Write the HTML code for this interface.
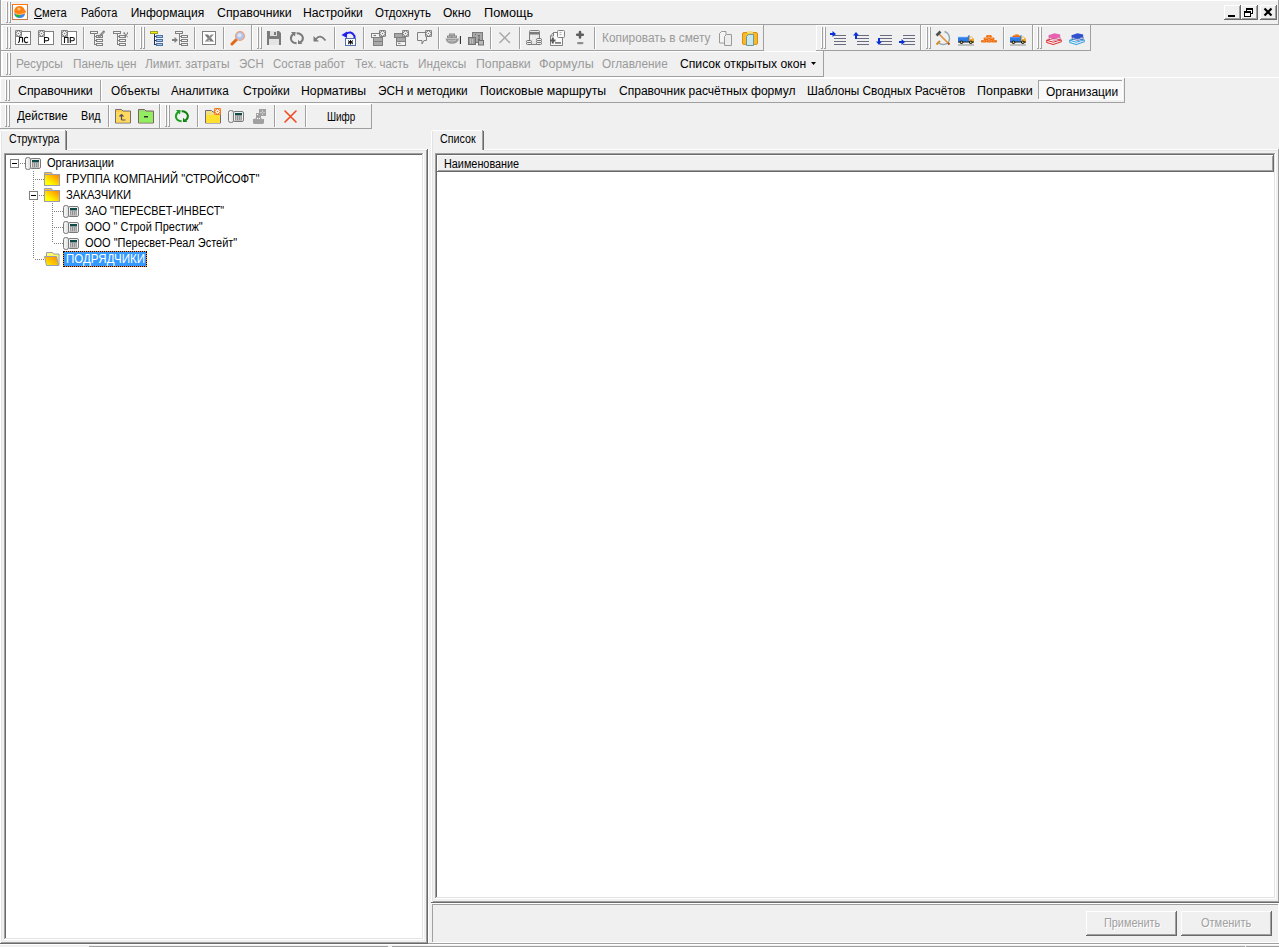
<!DOCTYPE html><html><head><meta charset="utf-8"><style>
*{margin:0;padding:0;box-sizing:border-box}
html,body{width:1279px;height:947px;overflow:hidden;background:#f0f0f0}
body{position:relative;font-family:"Liberation Sans",sans-serif}
.a{position:absolute}
.t{font-size:12px;line-height:14px;white-space:pre}
.tah{font-size:11px;line-height:13px;white-space:pre}
.dis{color:#8c8c8c}
</style></head><body><div class="a" style="left:0px;top:0px;width:1279px;height:1px;background:#fff;"></div>
<div class="a" style="left:0px;top:0px;width:1px;height:77px;background:#a0a0a0;"></div>
<div class="a" style="left:1px;top:1px;width:1px;height:76px;background:#fff;"></div>
<div class="a" style="left:1278px;top:0px;width:1px;height:25px;background:#a0a0a0;"></div>
<div class="a" style="left:0px;top:24px;width:1279px;height:1px;background:#a0a0a0;"></div>
<div class="a" style="left:6px;top:2px;width:1px;height:21px;background:#fff;"></div>
<div class="a" style="left:7px;top:2px;width:1px;height:21px;background:#a0a0a0;"></div>
<div class="a" style="left:9px;top:2px;width:1px;height:21px;background:#fff;"></div>
<div class="a" style="left:10px;top:2px;width:1px;height:21px;background:#a0a0a0;"></div>
<div class="a" style="left:6px;top:22px;width:1px;height:1px;background:#a0a0a0;"></div>
<div class="a" style="left:9px;top:22px;width:1px;height:1px;background:#a0a0a0;"></div>
<svg class="a" style="left:12px;top:4px" width="16" height="16" viewBox="0 0 16 16"><rect x="0.5" y="0.5" width="15" height="15" fill="#fff" stroke="#c87845"/><path d="M0 0.5H16" stroke="#ff7818"/><path d="M2 9.5Q3 14 8 14Q12 14 13 10z" fill="#3a86f0"/><path d="M3 10Q4 13.5 7 13.5Q8.5 11 7 10z" fill="#20b828"/><path d="M2.2 8.5Q2 2 7.5 2Q11.5 2 12.5 5.5L14 7.5Q13 10.5 10 10.5Q5 11 2.2 8.5Z" fill="#ff8010"/><path d="M4 10Q8 11.5 12.5 9" stroke="#ffc060" stroke-width="1" fill="none"/><circle cx="7" cy="5" r="1.6" fill="#ffc080"/></svg>
<div class="a t" style="left:34.30px;top:6px;color:#000;font-size:12px;transform:scaleX(0.9310);transform-origin:0 0;"><u>С</u>мета</div>
<div class="a t" style="left:80.70px;top:6px;color:#000;font-size:12px;transform:scaleX(0.9167);transform-origin:0 0;">Работа</div>
<div class="a t" style="left:130.70px;top:6px;color:#000;font-size:12px;">Информация</div>
<div class="a t" style="left:216.60px;top:6px;color:#000;font-size:12px;transform:scaleX(1.0265);transform-origin:0 0;">Справочники</div>
<div class="a t" style="left:303.20px;top:6px;color:#000;font-size:12px;transform:scaleX(1.0183);transform-origin:0 0;">Настройки</div>
<div class="a t" style="left:375.10px;top:6px;color:#000;font-size:12px;transform:scaleX(0.9588);transform-origin:0 0;">Отдохнуть</div>
<div class="a t" style="left:443.20px;top:6px;color:#000;font-size:12px;transform:scaleX(1.0032);transform-origin:0 0;">Окно</div>
<div class="a t" style="left:484.20px;top:6px;color:#000;font-size:12px;transform:scaleX(1.0587);transform-origin:0 0;">Помощь</div>
<div class="a" style="left:1224px;top:5px;width:17px;height:15px;background:#f0f0f0;"></div>
<div class="a" style="left:1224px;top:5px;width:17px;height:1px;background:#fff;"></div>
<div class="a" style="left:1224px;top:5px;width:1px;height:15px;background:#fff;"></div>
<div class="a" style="left:1224px;top:19px;width:17px;height:1px;background:#696969;"></div>
<div class="a" style="left:1240px;top:5px;width:1px;height:15px;background:#696969;"></div>
<div class="a" style="left:1225px;top:18px;width:15px;height:1px;background:#a0a0a0;"></div>
<div class="a" style="left:1239px;top:6px;width:1px;height:13px;background:#a0a0a0;"></div>
<div class="a" style="left:1228px;top:15px;width:7px;height:2px;background:#000"></div>
<div class="a" style="left:1241px;top:5px;width:17px;height:15px;background:#f0f0f0;"></div>
<div class="a" style="left:1241px;top:5px;width:17px;height:1px;background:#fff;"></div>
<div class="a" style="left:1241px;top:5px;width:1px;height:15px;background:#fff;"></div>
<div class="a" style="left:1241px;top:19px;width:17px;height:1px;background:#696969;"></div>
<div class="a" style="left:1257px;top:5px;width:1px;height:15px;background:#696969;"></div>
<div class="a" style="left:1242px;top:18px;width:15px;height:1px;background:#a0a0a0;"></div>
<div class="a" style="left:1256px;top:6px;width:1px;height:13px;background:#a0a0a0;"></div>
<svg class="a" style="left:1244px;top:7px" width="10" height="11"><rect x="2.5" y="1.5" width="6" height="5" fill="#fff" stroke="#000"/><rect x="2" y="1" width="7" height="2" fill="#000"/><rect x="0.5" y="4.5" width="6" height="5" fill="#fff" stroke="#000"/><rect x="0" y="4" width="7" height="2" fill="#000"/></svg>
<div class="a" style="left:1260px;top:5px;width:17px;height:15px;background:#f0f0f0;"></div>
<div class="a" style="left:1260px;top:5px;width:17px;height:1px;background:#fff;"></div>
<div class="a" style="left:1260px;top:5px;width:1px;height:15px;background:#fff;"></div>
<div class="a" style="left:1260px;top:19px;width:17px;height:1px;background:#696969;"></div>
<div class="a" style="left:1276px;top:5px;width:1px;height:15px;background:#696969;"></div>
<div class="a" style="left:1261px;top:18px;width:15px;height:1px;background:#a0a0a0;"></div>
<div class="a" style="left:1275px;top:6px;width:1px;height:13px;background:#a0a0a0;"></div>
<svg class="a" style="left:1263px;top:7px" width="11" height="10"><path d="M1.5 1.5L8.5 8.5M8.5 1.5L1.5 8.5" stroke="#000" stroke-width="2.2"/></svg>
<div class="a" style="left:2px;top:25px;width:133px;height:1px;background:#fff;"></div>
<div class="a" style="left:2px;top:25px;width:1px;height:26px;background:#fff;"></div>
<div class="a" style="left:2px;top:50px;width:133px;height:1px;background:#a0a0a0;"></div>
<div class="a" style="left:134px;top:25px;width:1px;height:26px;background:#a0a0a0;"></div>
<div class="a" style="left:6px;top:27px;width:1px;height:22px;background:#fff;"></div>
<div class="a" style="left:7px;top:27px;width:1px;height:22px;background:#a0a0a0;"></div>
<div class="a" style="left:9px;top:27px;width:1px;height:22px;background:#fff;"></div>
<div class="a" style="left:10px;top:27px;width:1px;height:22px;background:#a0a0a0;"></div>
<div class="a" style="left:6px;top:48px;width:1px;height:1px;background:#a0a0a0;"></div>
<div class="a" style="left:9px;top:48px;width:1px;height:1px;background:#a0a0a0;"></div>
<div class="a" style="left:135px;top:25px;width:117px;height:1px;background:#fff;"></div>
<div class="a" style="left:135px;top:25px;width:1px;height:26px;background:#fff;"></div>
<div class="a" style="left:135px;top:50px;width:117px;height:1px;background:#a0a0a0;"></div>
<div class="a" style="left:251px;top:25px;width:1px;height:26px;background:#a0a0a0;"></div>
<div class="a" style="left:140px;top:27px;width:1px;height:22px;background:#fff;"></div>
<div class="a" style="left:141px;top:27px;width:1px;height:22px;background:#a0a0a0;"></div>
<div class="a" style="left:143px;top:27px;width:1px;height:22px;background:#fff;"></div>
<div class="a" style="left:144px;top:27px;width:1px;height:22px;background:#a0a0a0;"></div>
<div class="a" style="left:140px;top:48px;width:1px;height:1px;background:#a0a0a0;"></div>
<div class="a" style="left:143px;top:48px;width:1px;height:1px;background:#a0a0a0;"></div>
<div class="a" style="left:252px;top:25px;width:512px;height:1px;background:#fff;"></div>
<div class="a" style="left:252px;top:25px;width:1px;height:26px;background:#fff;"></div>
<div class="a" style="left:252px;top:50px;width:512px;height:1px;background:#a0a0a0;"></div>
<div class="a" style="left:763px;top:25px;width:1px;height:26px;background:#a0a0a0;"></div>
<div class="a" style="left:257px;top:27px;width:1px;height:22px;background:#fff;"></div>
<div class="a" style="left:258px;top:27px;width:1px;height:22px;background:#a0a0a0;"></div>
<div class="a" style="left:260px;top:27px;width:1px;height:22px;background:#fff;"></div>
<div class="a" style="left:261px;top:27px;width:1px;height:22px;background:#a0a0a0;"></div>
<div class="a" style="left:257px;top:48px;width:1px;height:1px;background:#a0a0a0;"></div>
<div class="a" style="left:260px;top:48px;width:1px;height:1px;background:#a0a0a0;"></div>
<div class="a" style="left:816px;top:25px;width:105px;height:1px;background:#fff;"></div>
<div class="a" style="left:816px;top:25px;width:1px;height:26px;background:#fff;"></div>
<div class="a" style="left:816px;top:50px;width:105px;height:1px;background:#a0a0a0;"></div>
<div class="a" style="left:920px;top:25px;width:1px;height:26px;background:#a0a0a0;"></div>
<div class="a" style="left:821px;top:27px;width:1px;height:22px;background:#fff;"></div>
<div class="a" style="left:822px;top:27px;width:1px;height:22px;background:#a0a0a0;"></div>
<div class="a" style="left:824px;top:27px;width:1px;height:22px;background:#fff;"></div>
<div class="a" style="left:825px;top:27px;width:1px;height:22px;background:#a0a0a0;"></div>
<div class="a" style="left:821px;top:48px;width:1px;height:1px;background:#a0a0a0;"></div>
<div class="a" style="left:824px;top:48px;width:1px;height:1px;background:#a0a0a0;"></div>
<div class="a" style="left:921px;top:25px;width:112px;height:1px;background:#fff;"></div>
<div class="a" style="left:921px;top:25px;width:1px;height:26px;background:#fff;"></div>
<div class="a" style="left:921px;top:50px;width:112px;height:1px;background:#a0a0a0;"></div>
<div class="a" style="left:1032px;top:25px;width:1px;height:26px;background:#a0a0a0;"></div>
<div class="a" style="left:926px;top:27px;width:1px;height:22px;background:#fff;"></div>
<div class="a" style="left:927px;top:27px;width:1px;height:22px;background:#a0a0a0;"></div>
<div class="a" style="left:929px;top:27px;width:1px;height:22px;background:#fff;"></div>
<div class="a" style="left:930px;top:27px;width:1px;height:22px;background:#a0a0a0;"></div>
<div class="a" style="left:926px;top:48px;width:1px;height:1px;background:#a0a0a0;"></div>
<div class="a" style="left:929px;top:48px;width:1px;height:1px;background:#a0a0a0;"></div>
<div class="a" style="left:1033px;top:25px;width:58px;height:1px;background:#fff;"></div>
<div class="a" style="left:1033px;top:25px;width:1px;height:26px;background:#fff;"></div>
<div class="a" style="left:1033px;top:50px;width:58px;height:1px;background:#a0a0a0;"></div>
<div class="a" style="left:1090px;top:25px;width:1px;height:26px;background:#a0a0a0;"></div>
<div class="a" style="left:1037px;top:27px;width:1px;height:22px;background:#fff;"></div>
<div class="a" style="left:1038px;top:27px;width:1px;height:22px;background:#a0a0a0;"></div>
<div class="a" style="left:1040px;top:27px;width:1px;height:22px;background:#fff;"></div>
<div class="a" style="left:1041px;top:27px;width:1px;height:22px;background:#a0a0a0;"></div>
<div class="a" style="left:1037px;top:48px;width:1px;height:1px;background:#a0a0a0;"></div>
<div class="a" style="left:1040px;top:48px;width:1px;height:1px;background:#a0a0a0;"></div>
<div class="a" style="left:83px;top:27px;width:1px;height:22px;background:#a0a0a0;"></div>
<div class="a" style="left:84px;top:27px;width:1px;height:22px;background:#fff;"></div>
<div class="a" style="left:194px;top:27px;width:1px;height:22px;background:#a0a0a0;"></div>
<div class="a" style="left:195px;top:27px;width:1px;height:22px;background:#fff;"></div>
<div class="a" style="left:223px;top:27px;width:1px;height:22px;background:#a0a0a0;"></div>
<div class="a" style="left:224px;top:27px;width:1px;height:22px;background:#fff;"></div>
<div class="a" style="left:334px;top:27px;width:1px;height:22px;background:#a0a0a0;"></div>
<div class="a" style="left:335px;top:27px;width:1px;height:22px;background:#fff;"></div>
<div class="a" style="left:363px;top:27px;width:1px;height:22px;background:#a0a0a0;"></div>
<div class="a" style="left:364px;top:27px;width:1px;height:22px;background:#fff;"></div>
<div class="a" style="left:438px;top:27px;width:1px;height:22px;background:#a0a0a0;"></div>
<div class="a" style="left:439px;top:27px;width:1px;height:22px;background:#fff;"></div>
<div class="a" style="left:490px;top:27px;width:1px;height:22px;background:#a0a0a0;"></div>
<div class="a" style="left:491px;top:27px;width:1px;height:22px;background:#fff;"></div>
<div class="a" style="left:519px;top:27px;width:1px;height:22px;background:#a0a0a0;"></div>
<div class="a" style="left:520px;top:27px;width:1px;height:22px;background:#fff;"></div>
<div class="a" style="left:594px;top:27px;width:1px;height:22px;background:#a0a0a0;"></div>
<div class="a" style="left:595px;top:27px;width:1px;height:22px;background:#fff;"></div>
<div class="a" style="left:1003px;top:27px;width:1px;height:22px;background:#a0a0a0;"></div>
<div class="a" style="left:1004px;top:27px;width:1px;height:22px;background:#fff;"></div>
<div class="a t" style="left:602.00px;top:31px;color:#9a9a9a;font-size:12px;transform:scaleX(0.9881);transform-origin:0 0;">Копировать в смету</div>
<div class="a" style="left:2px;top:51px;width:822px;height:1px;background:#fff;"></div>
<div class="a" style="left:2px;top:51px;width:1px;height:26px;background:#fff;"></div>
<div class="a" style="left:2px;top:76px;width:822px;height:1px;background:#a0a0a0;"></div>
<div class="a" style="left:823px;top:51px;width:1px;height:26px;background:#a0a0a0;"></div>
<div class="a" style="left:0px;top:50px;width:2px;height:1px;background:#a0a0a0;"></div>
<div class="a" style="left:6px;top:53px;width:1px;height:22px;background:#fff;"></div>
<div class="a" style="left:7px;top:53px;width:1px;height:22px;background:#a0a0a0;"></div>
<div class="a" style="left:9px;top:53px;width:1px;height:22px;background:#fff;"></div>
<div class="a" style="left:10px;top:53px;width:1px;height:22px;background:#a0a0a0;"></div>
<div class="a" style="left:6px;top:74px;width:1px;height:1px;background:#a0a0a0;"></div>
<div class="a" style="left:9px;top:74px;width:1px;height:1px;background:#a0a0a0;"></div>
<div class="a t" style="left:16.30px;top:57px;color:#9a9a9a;font-size:12px;transform:scaleX(0.9895);transform-origin:0 0;">Ресурсы</div>
<div class="a t" style="left:72.50px;top:57px;color:#9a9a9a;font-size:12px;transform:scaleX(0.9813);transform-origin:0 0;">Панель цен</div>
<div class="a t" style="left:145.00px;top:57px;color:#9a9a9a;font-size:12px;transform:scaleX(0.9958);transform-origin:0 0;">Лимит. затраты</div>
<div class="a t" style="left:239.00px;top:57px;color:#9a9a9a;font-size:12px;transform:scaleX(0.9490);transform-origin:0 0;">ЭСН</div>
<div class="a t" style="left:272.50px;top:57px;color:#9a9a9a;font-size:12px;transform:scaleX(0.9575);transform-origin:0 0;">Состав работ</div>
<div class="a t" style="left:354.50px;top:57px;color:#9a9a9a;font-size:12px;transform:scaleX(0.9527);transform-origin:0 0;">Тех. часть</div>
<div class="a t" style="left:417.50px;top:57px;color:#9a9a9a;font-size:12px;transform:scaleX(0.9832);transform-origin:0 0;">Индексы</div>
<div class="a t" style="left:475.50px;top:57px;color:#9a9a9a;font-size:12px;transform:scaleX(1.0233);transform-origin:0 0;">Поправки</div>
<div class="a t" style="left:539.00px;top:57px;color:#9a9a9a;font-size:12px;transform:scaleX(1.0466);transform-origin:0 0;">Формулы</div>
<div class="a t" style="left:602.00px;top:57px;color:#9a9a9a;font-size:12px;transform:scaleX(0.9817);transform-origin:0 0;">Оглавление</div>
<div class="a t" style="left:679.50px;top:57px;color:#000;font-size:12px;transform:scaleX(1.0129);transform-origin:0 0;">Список открытых окон</div>
<svg class="a" style="left:811px;top:62px" width="5" height="3"><path d="M0 0H5L2.5 3Z" fill="#000"/></svg>
<div class="a" style="left:0px;top:76px;width:824px;height:1px;background:#a0a0a0;"></div>
<div class="a" style="left:0px;top:77px;width:1279px;height:1px;background:#fff;"></div>
<div class="a" style="left:0px;top:78px;width:1125px;height:1px;background:#fff;"></div>
<div class="a" style="left:0px;top:78px;width:1px;height:25px;background:#fff;"></div>
<div class="a" style="left:0px;top:102px;width:1125px;height:1px;background:#a0a0a0;"></div>
<div class="a" style="left:1124px;top:78px;width:1px;height:25px;background:#a0a0a0;"></div>
<div class="a" style="left:5px;top:80px;width:1px;height:21px;background:#fff;"></div>
<div class="a" style="left:6px;top:80px;width:1px;height:21px;background:#a0a0a0;"></div>
<div class="a" style="left:8px;top:80px;width:1px;height:21px;background:#fff;"></div>
<div class="a" style="left:9px;top:80px;width:1px;height:21px;background:#a0a0a0;"></div>
<div class="a" style="left:5px;top:100px;width:1px;height:1px;background:#a0a0a0;"></div>
<div class="a" style="left:8px;top:100px;width:1px;height:1px;background:#a0a0a0;"></div>
<div class="a" style="left:100px;top:80px;width:1px;height:21px;background:#a0a0a0;"></div>
<div class="a" style="left:101px;top:80px;width:1px;height:21px;background:#fff;"></div>
<div class="a t" style="left:17.50px;top:84px;color:#000;font-size:12px;transform:scaleX(1.0279);transform-origin:0 0;">Справочники</div>
<div class="a t" style="left:110.50px;top:84px;color:#000;font-size:12px;transform:scaleX(0.9823);transform-origin:0 0;">Объекты</div>
<div class="a t" style="left:171.00px;top:84px;color:#000;font-size:12px;transform:scaleX(0.9712);transform-origin:0 0;">Аналитика</div>
<div class="a t" style="left:242.50px;top:84px;color:#000;font-size:12px;transform:scaleX(1.0118);transform-origin:0 0;">Стройки</div>
<div class="a t" style="left:301.00px;top:84px;color:#000;font-size:12px;transform:scaleX(1.0198);transform-origin:0 0;">Нормативы</div>
<div class="a t" style="left:378.00px;top:84px;color:#000;font-size:12px;transform:scaleX(0.9826);transform-origin:0 0;">ЭСН и методики</div>
<div class="a t" style="left:480.00px;top:84px;color:#000;font-size:12px;transform:scaleX(1.0259);transform-origin:0 0;">Поисковые маршруты</div>
<div class="a t" style="left:618.50px;top:84px;color:#000;font-size:12px;transform:scaleX(1.0035);transform-origin:0 0;">Справочник расчётных формул</div>
<div class="a t" style="left:807.00px;top:84px;color:#000;font-size:12px;transform:scaleX(0.9850);transform-origin:0 0;">Шаблоны Сводных Расчётов</div>
<div class="a t" style="left:977.00px;top:84px;color:#000;font-size:12px;transform:scaleX(1.0423);transform-origin:0 0;">Поправки</div>
<div class="a" style="left:1038px;top:80px;width:85px;height:20px;background:#f9f9f9;"></div>
<div class="a" style="left:1038px;top:80px;width:85px;height:1px;background:#a0a0a0;"></div>
<div class="a" style="left:1038px;top:80px;width:1px;height:20px;background:#a0a0a0;"></div>
<div class="a" style="left:1038px;top:99px;width:85px;height:1px;background:#fff;"></div>
<div class="a" style="left:1122px;top:80px;width:1px;height:20px;background:#fff;"></div>
<div class="a t" style="left:1045.50px;top:85px;color:#000;font-size:12px;transform:scaleX(0.9948);transform-origin:0 0;">Организации</div>
<div class="a" style="left:0px;top:102px;width:1125px;height:1px;background:#a0a0a0;"></div>
<div class="a" style="left:0px;top:103px;width:372px;height:1px;background:#fff;"></div>
<div class="a" style="left:0px;top:104px;width:160px;height:1px;background:#fff;"></div>
<div class="a" style="left:0px;top:104px;width:1px;height:25px;background:#fff;"></div>
<div class="a" style="left:0px;top:128px;width:160px;height:1px;background:#a0a0a0;"></div>
<div class="a" style="left:159px;top:104px;width:1px;height:25px;background:#a0a0a0;"></div>
<div class="a" style="left:5px;top:105px;width:1px;height:22px;background:#fff;"></div>
<div class="a" style="left:6px;top:105px;width:1px;height:22px;background:#a0a0a0;"></div>
<div class="a" style="left:8px;top:105px;width:1px;height:22px;background:#fff;"></div>
<div class="a" style="left:9px;top:105px;width:1px;height:22px;background:#a0a0a0;"></div>
<div class="a" style="left:5px;top:126px;width:1px;height:1px;background:#a0a0a0;"></div>
<div class="a" style="left:8px;top:126px;width:1px;height:1px;background:#a0a0a0;"></div>
<div class="a t" style="left:17.00px;top:109px;color:#000;font-size:12px;transform:scaleX(0.9608);transform-origin:0 0;">Действие</div>
<div class="a t" style="left:80.50px;top:109px;color:#000;font-size:12px;transform:scaleX(0.8983);transform-origin:0 0;">Вид</div>
<div class="a" style="left:108px;top:105px;width:1px;height:22px;background:#a0a0a0;"></div>
<div class="a" style="left:109px;top:105px;width:1px;height:22px;background:#fff;"></div>
<div class="a" style="left:160px;top:104px;width:212px;height:1px;background:#fff;"></div>
<div class="a" style="left:160px;top:104px;width:1px;height:25px;background:#fff;"></div>
<div class="a" style="left:160px;top:128px;width:212px;height:1px;background:#a0a0a0;"></div>
<div class="a" style="left:371px;top:104px;width:1px;height:25px;background:#a0a0a0;"></div>
<div class="a" style="left:165px;top:105px;width:1px;height:22px;background:#fff;"></div>
<div class="a" style="left:166px;top:105px;width:1px;height:22px;background:#a0a0a0;"></div>
<div class="a" style="left:168px;top:105px;width:1px;height:22px;background:#fff;"></div>
<div class="a" style="left:169px;top:105px;width:1px;height:22px;background:#a0a0a0;"></div>
<div class="a" style="left:165px;top:126px;width:1px;height:1px;background:#a0a0a0;"></div>
<div class="a" style="left:168px;top:126px;width:1px;height:1px;background:#a0a0a0;"></div>
<div class="a" style="left:197px;top:105px;width:1px;height:22px;background:#a0a0a0;"></div>
<div class="a" style="left:198px;top:105px;width:1px;height:22px;background:#fff;"></div>
<div class="a" style="left:274px;top:105px;width:1px;height:22px;background:#a0a0a0;"></div>
<div class="a" style="left:275px;top:105px;width:1px;height:22px;background:#fff;"></div>
<div class="a" style="left:305px;top:105px;width:1px;height:22px;background:#a0a0a0;"></div>
<div class="a" style="left:306px;top:105px;width:1px;height:22px;background:#fff;"></div>
<div class="a t" style="left:326.50px;top:110px;color:#000;font-size:12px;transform:scaleX(0.8243);transform-origin:0 0;">Шифр</div>
<div class="a" style="left:0px;top:128px;width:372px;height:1px;background:#a0a0a0;"></div>
<div class="a" style="left:1px;top:130px;width:64px;height:1px;background:#fff;"></div>
<div class="a" style="left:0px;top:131px;width:1px;height:812px;background:#fff;"></div>
<div class="a" style="left:1px;top:131px;width:1px;height:810px;background:#e3e3e3;"></div>
<div class="a" style="left:65px;top:130px;width:1px;height:20px;background:#a0a0a0;"></div>
<div class="a" style="left:66px;top:131px;width:1px;height:19px;background:#696969;"></div>
<div class="a t" style="left:8.60px;top:132px;color:#000;font-size:12px;transform:scaleX(0.8872);transform-origin:0 0;">Структура</div>
<div class="a" style="left:67px;top:149px;width:361px;height:1px;background:#fff;"></div>
<div class="a" style="left:67px;top:150px;width:359px;height:1px;background:#e3e3e3;"></div>
<div class="a" style="left:426px;top:150px;width:1px;height:793px;background:#a0a0a0;"></div>
<div class="a" style="left:427px;top:149px;width:1px;height:795px;background:#696969;"></div>
<div class="a" style="left:1px;top:942px;width:426px;height:1px;background:#a0a0a0;"></div>
<div class="a" style="left:0px;top:943px;width:428px;height:1px;background:#696969;"></div>
<div class="a" style="left:4px;top:153px;width:420px;height:787px;background:#fff;"></div>
<div class="a" style="left:4px;top:153px;width:419px;height:1px;background:#a0a0a0;"></div>
<div class="a" style="left:4px;top:153px;width:1px;height:786px;background:#a0a0a0;"></div>
<div class="a" style="left:5px;top:154px;width:417px;height:1px;background:#696969;"></div>
<div class="a" style="left:5px;top:154px;width:1px;height:784px;background:#696969;"></div>
<div class="a" style="left:4px;top:939px;width:420px;height:1px;background:#fff;"></div>
<div class="a" style="left:423px;top:153px;width:1px;height:787px;background:#fff;"></div>
<div class="a" style="left:5px;top:938px;width:418px;height:1px;background:#e3e3e3;"></div>
<div class="a" style="left:422px;top:154px;width:1px;height:785px;background:#e3e3e3;"></div>
<div class="a" style="left:428px;top:149px;width:1px;height:795px;background:#fff;"></div>
<div class="a" style="left:432px;top:130px;width:50px;height:1px;background:#fff;"></div>
<div class="a" style="left:431px;top:131px;width:1px;height:773px;background:#fff;"></div>
<div class="a" style="left:432px;top:131px;width:1px;height:770px;background:#e3e3e3;"></div>
<div class="a" style="left:482px;top:130px;width:1px;height:20px;background:#a0a0a0;"></div>
<div class="a" style="left:483px;top:131px;width:1px;height:19px;background:#696969;"></div>
<div class="a t" style="left:439.70px;top:132px;color:#000;font-size:12px;transform:scaleX(0.8924);transform-origin:0 0;">Список</div>
<div class="a" style="left:484px;top:149px;width:794px;height:1px;background:#fff;"></div>
<div class="a" style="left:484px;top:150px;width:793px;height:1px;background:#e3e3e3;"></div>
<div class="a" style="left:1278px;top:149px;width:1px;height:754px;background:#a0a0a0;"></div>
<div class="a" style="left:433px;top:901px;width:845px;height:1px;background:#a0a0a0;"></div>
<div class="a" style="left:431px;top:902px;width:848px;height:1px;background:#696969;"></div>
<div class="a" style="left:435px;top:153px;width:841px;height:746px;background:#fff;"></div>
<div class="a" style="left:435px;top:153px;width:840px;height:1px;background:#a0a0a0;"></div>
<div class="a" style="left:435px;top:153px;width:1px;height:745px;background:#a0a0a0;"></div>
<div class="a" style="left:436px;top:154px;width:838px;height:1px;background:#696969;"></div>
<div class="a" style="left:436px;top:154px;width:1px;height:743px;background:#696969;"></div>
<div class="a" style="left:435px;top:898px;width:841px;height:1px;background:#fff;"></div>
<div class="a" style="left:1275px;top:153px;width:1px;height:746px;background:#fff;"></div>
<div class="a" style="left:436px;top:897px;width:839px;height:1px;background:#e3e3e3;"></div>
<div class="a" style="left:1274px;top:154px;width:1px;height:744px;background:#e3e3e3;"></div>
<div class="a" style="left:437px;top:155px;width:837px;height:17px;background:#f0f0f0;"></div>
<div class="a" style="left:437px;top:155px;width:837px;height:1px;background:#fff;"></div>
<div class="a" style="left:437px;top:155px;width:1px;height:17px;background:#fff;"></div>
<div class="a" style="left:437px;top:171px;width:837px;height:1px;background:#696969;"></div>
<div class="a" style="left:1273px;top:155px;width:1px;height:17px;background:#696969;"></div>
<div class="a" style="left:438px;top:170px;width:835px;height:1px;background:#a0a0a0;"></div>
<div class="a" style="left:1272px;top:156px;width:1px;height:15px;background:#a0a0a0;"></div>
<div class="a t" style="left:443.60px;top:157px;color:#000;font-size:12px;transform:scaleX(0.9029);transform-origin:0 0;">Наименование</div>
<div class="a" style="left:431px;top:903px;width:848px;height:1px;background:#fff;"></div>
<div class="a" style="left:432px;top:904px;width:846px;height:1px;background:#a0a0a0;"></div>
<div class="a" style="left:432px;top:904px;width:1px;height:38px;background:#a0a0a0;"></div>
<div class="a" style="left:432px;top:942px;width:847px;height:1px;background:#fff;"></div>
<div class="a" style="left:1278px;top:904px;width:1px;height:39px;background:#fff;"></div>
<div class="a" style="left:1086px;top:911px;width:91px;height:25px;background:#f0f0f0;"></div>
<div class="a" style="left:1086px;top:911px;width:91px;height:1px;background:#fff;"></div>
<div class="a" style="left:1086px;top:911px;width:1px;height:25px;background:#fff;"></div>
<div class="a" style="left:1086px;top:935px;width:91px;height:1px;background:#696969;"></div>
<div class="a" style="left:1176px;top:911px;width:1px;height:25px;background:#696969;"></div>
<div class="a" style="left:1087px;top:934px;width:89px;height:1px;background:#a0a0a0;"></div>
<div class="a" style="left:1175px;top:912px;width:1px;height:23px;background:#a0a0a0;"></div>
<div class="a t" style="left:1104.00px;top:916px;color:#a0a0a0;font-size:12px;transform:scaleX(0.9069);transform-origin:0 0;text-shadow:1px 1px 0 #fff">Применить</div>
<div class="a" style="left:1181px;top:911px;width:91px;height:25px;background:#f0f0f0;"></div>
<div class="a" style="left:1181px;top:911px;width:91px;height:1px;background:#fff;"></div>
<div class="a" style="left:1181px;top:911px;width:1px;height:25px;background:#fff;"></div>
<div class="a" style="left:1181px;top:935px;width:91px;height:1px;background:#696969;"></div>
<div class="a" style="left:1271px;top:911px;width:1px;height:25px;background:#696969;"></div>
<div class="a" style="left:1182px;top:934px;width:89px;height:1px;background:#a0a0a0;"></div>
<div class="a" style="left:1270px;top:912px;width:1px;height:23px;background:#a0a0a0;"></div>
<div class="a t" style="left:1201.00px;top:916px;color:#a0a0a0;font-size:12px;transform:scaleX(0.9161);transform-origin:0 0;text-shadow:1px 1px 0 #fff">Отменить</div>
<div class="a" style="left:428px;top:943px;width:851px;height:1px;background:#a0a0a0;"></div>
<div class="a" style="left:0px;top:944px;width:1279px;height:1px;background:#fff;"></div>
<div class="a" style="left:89px;top:946px;width:299px;height:1px;background:#a0a0a0;"></div>
<div class="a" style="left:392px;top:946px;width:853px;height:1px;background:#a0a0a0;"></div>
<div class="a" style="left:1246px;top:946px;width:33px;height:1px;background:#a0a0a0;"></div>
<div class="a" style="left:10px;top:159px;width:9px;height:9px;border:1px solid #808080;background:#fff"></div>
<div class="a" style="left:12px;top:163px;width:5px;height:1px;background:#000;"></div>
<div class="a" style="left:20px;top:163px;width:1px;height:1px;background:#808080;"></div>
<div class="a" style="left:22px;top:163px;width:1px;height:1px;background:#808080;"></div>
<div class="a" style="left:24px;top:163px;width:1px;height:1px;background:#808080;"></div>
<svg class="a" style="left:25px;top:155px" width="16" height="16" viewBox="0 0 16 16"><rect x="5.5" y="3.5" width="10" height="10" rx="1.5" fill="#f0f0f0" stroke="#7a7a7a"/><rect x="0.5" y="2.5" width="5" height="12" rx="2" fill="#e6e6e6" stroke="#7a7a7a"/><path d="M2 4v9" stroke="#fff"/><rect x="7" y="5" width="7" height="2.3" fill="#0e4a48"/><rect x="7" y="7.3" width="7" height="5.2" fill="#8a8a8a"/><path d="M7.8 9h1.2M10 9h1.2M12.2 9h1.2M7.8 11h1.2M10 11h1.2M12.2 11h1.2" stroke="#fff" stroke-width="1.1"/></svg>
<div class="a t" style="left:47.00px;top:156px;color:#000;font-size:12px;transform:scaleX(0.9238);transform-origin:0 0;">Организации</div>
<div class="a" style="left:33px;top:171px;width:1px;height:1px;background:#808080;"></div>
<div class="a" style="left:33px;top:173px;width:1px;height:1px;background:#808080;"></div>
<div class="a" style="left:33px;top:175px;width:1px;height:1px;background:#808080;"></div>
<div class="a" style="left:33px;top:177px;width:1px;height:1px;background:#808080;"></div>
<div class="a" style="left:33px;top:179px;width:1px;height:1px;background:#808080;"></div>
<div class="a" style="left:33px;top:181px;width:1px;height:1px;background:#808080;"></div>
<div class="a" style="left:33px;top:183px;width:1px;height:1px;background:#808080;"></div>
<div class="a" style="left:33px;top:185px;width:1px;height:1px;background:#808080;"></div>
<div class="a" style="left:33px;top:187px;width:1px;height:1px;background:#808080;"></div>
<div class="a" style="left:33px;top:189px;width:1px;height:1px;background:#808080;"></div>
<div class="a" style="left:33px;top:191px;width:1px;height:1px;background:#808080;"></div>
<div class="a" style="left:33px;top:193px;width:1px;height:1px;background:#808080;"></div>
<div class="a" style="left:33px;top:195px;width:1px;height:1px;background:#808080;"></div>
<div class="a" style="left:33px;top:197px;width:1px;height:1px;background:#808080;"></div>
<div class="a" style="left:33px;top:199px;width:1px;height:1px;background:#808080;"></div>
<div class="a" style="left:33px;top:201px;width:1px;height:1px;background:#808080;"></div>
<div class="a" style="left:33px;top:203px;width:1px;height:1px;background:#808080;"></div>
<div class="a" style="left:33px;top:205px;width:1px;height:1px;background:#808080;"></div>
<div class="a" style="left:33px;top:207px;width:1px;height:1px;background:#808080;"></div>
<div class="a" style="left:33px;top:209px;width:1px;height:1px;background:#808080;"></div>
<div class="a" style="left:33px;top:211px;width:1px;height:1px;background:#808080;"></div>
<div class="a" style="left:33px;top:213px;width:1px;height:1px;background:#808080;"></div>
<div class="a" style="left:33px;top:215px;width:1px;height:1px;background:#808080;"></div>
<div class="a" style="left:33px;top:217px;width:1px;height:1px;background:#808080;"></div>
<div class="a" style="left:33px;top:219px;width:1px;height:1px;background:#808080;"></div>
<div class="a" style="left:33px;top:221px;width:1px;height:1px;background:#808080;"></div>
<div class="a" style="left:33px;top:223px;width:1px;height:1px;background:#808080;"></div>
<div class="a" style="left:33px;top:225px;width:1px;height:1px;background:#808080;"></div>
<div class="a" style="left:33px;top:227px;width:1px;height:1px;background:#808080;"></div>
<div class="a" style="left:33px;top:229px;width:1px;height:1px;background:#808080;"></div>
<div class="a" style="left:33px;top:231px;width:1px;height:1px;background:#808080;"></div>
<div class="a" style="left:33px;top:233px;width:1px;height:1px;background:#808080;"></div>
<div class="a" style="left:33px;top:235px;width:1px;height:1px;background:#808080;"></div>
<div class="a" style="left:33px;top:237px;width:1px;height:1px;background:#808080;"></div>
<div class="a" style="left:33px;top:239px;width:1px;height:1px;background:#808080;"></div>
<div class="a" style="left:33px;top:241px;width:1px;height:1px;background:#808080;"></div>
<div class="a" style="left:33px;top:243px;width:1px;height:1px;background:#808080;"></div>
<div class="a" style="left:33px;top:245px;width:1px;height:1px;background:#808080;"></div>
<div class="a" style="left:33px;top:247px;width:1px;height:1px;background:#808080;"></div>
<div class="a" style="left:33px;top:249px;width:1px;height:1px;background:#808080;"></div>
<div class="a" style="left:33px;top:251px;width:1px;height:1px;background:#808080;"></div>
<div class="a" style="left:33px;top:253px;width:1px;height:1px;background:#808080;"></div>
<div class="a" style="left:33px;top:255px;width:1px;height:1px;background:#808080;"></div>
<div class="a" style="left:33px;top:257px;width:1px;height:1px;background:#808080;"></div>
<div class="a" style="left:35px;top:179px;width:1px;height:1px;background:#808080;"></div>
<div class="a" style="left:37px;top:179px;width:1px;height:1px;background:#808080;"></div>
<div class="a" style="left:39px;top:179px;width:1px;height:1px;background:#808080;"></div>
<div class="a" style="left:41px;top:179px;width:1px;height:1px;background:#808080;"></div>
<div class="a" style="left:43px;top:179px;width:1px;height:1px;background:#808080;"></div>
<div class="a" style="left:35px;top:259px;width:1px;height:1px;background:#808080;"></div>
<div class="a" style="left:37px;top:259px;width:1px;height:1px;background:#808080;"></div>
<div class="a" style="left:39px;top:259px;width:1px;height:1px;background:#808080;"></div>
<div class="a" style="left:41px;top:259px;width:1px;height:1px;background:#808080;"></div>
<div class="a" style="left:43px;top:259px;width:1px;height:1px;background:#808080;"></div>
<svg class="a" style="left:44px;top:171px" width="16" height="16" viewBox="0 0 16 16"><defs><linearGradient id="fg" x1="0" y1="1" x2="1" y2="0"><stop offset="0.25" stop-color="#ffff00"/><stop offset="0.95" stop-color="#ff8800"/></linearGradient></defs><path d="M0.5 3.5V1.5h7l1 2" fill="#ffc040" stroke="#9c9cb0"/><rect x="0.5" y="3.5" width="15" height="11" fill="url(#fg)" stroke="#9c9cb0"/></svg>
<div class="a t" style="left:65.50px;top:172px;color:#000;font-size:12px;transform:scaleX(0.9398);transform-origin:0 0;">ГРУППА КОМПАНИЙ "СТРОЙСОФТ"</div>
<div class="a" style="left:29px;top:191px;width:9px;height:9px;border:1px solid #808080;background:#fff"></div>
<div class="a" style="left:31px;top:195px;width:5px;height:1px;background:#000;"></div>
<div class="a" style="left:39px;top:195px;width:1px;height:1px;background:#808080;"></div>
<div class="a" style="left:41px;top:195px;width:1px;height:1px;background:#808080;"></div>
<div class="a" style="left:43px;top:195px;width:1px;height:1px;background:#808080;"></div>
<svg class="a" style="left:44px;top:187px" width="16" height="16" viewBox="0 0 16 16"><defs><linearGradient id="fg" x1="0" y1="1" x2="1" y2="0"><stop offset="0.25" stop-color="#ffff00"/><stop offset="0.95" stop-color="#ff8800"/></linearGradient></defs><path d="M0.5 3.5V1.5h7l1 2" fill="#ffc040" stroke="#9c9cb0"/><rect x="0.5" y="3.5" width="15" height="11" fill="url(#fg)" stroke="#9c9cb0"/></svg>
<div class="a t" style="left:66.00px;top:188px;color:#000;font-size:12px;transform:scaleX(0.9387);transform-origin:0 0;">ЗАКАЗЧИКИ</div>
<div class="a" style="left:52px;top:203px;width:1px;height:1px;background:#808080;"></div>
<div class="a" style="left:52px;top:205px;width:1px;height:1px;background:#808080;"></div>
<div class="a" style="left:52px;top:207px;width:1px;height:1px;background:#808080;"></div>
<div class="a" style="left:52px;top:209px;width:1px;height:1px;background:#808080;"></div>
<div class="a" style="left:52px;top:211px;width:1px;height:1px;background:#808080;"></div>
<div class="a" style="left:52px;top:213px;width:1px;height:1px;background:#808080;"></div>
<div class="a" style="left:52px;top:215px;width:1px;height:1px;background:#808080;"></div>
<div class="a" style="left:52px;top:217px;width:1px;height:1px;background:#808080;"></div>
<div class="a" style="left:52px;top:219px;width:1px;height:1px;background:#808080;"></div>
<div class="a" style="left:52px;top:221px;width:1px;height:1px;background:#808080;"></div>
<div class="a" style="left:52px;top:223px;width:1px;height:1px;background:#808080;"></div>
<div class="a" style="left:52px;top:225px;width:1px;height:1px;background:#808080;"></div>
<div class="a" style="left:52px;top:227px;width:1px;height:1px;background:#808080;"></div>
<div class="a" style="left:52px;top:229px;width:1px;height:1px;background:#808080;"></div>
<div class="a" style="left:52px;top:231px;width:1px;height:1px;background:#808080;"></div>
<div class="a" style="left:52px;top:233px;width:1px;height:1px;background:#808080;"></div>
<div class="a" style="left:52px;top:235px;width:1px;height:1px;background:#808080;"></div>
<div class="a" style="left:52px;top:237px;width:1px;height:1px;background:#808080;"></div>
<div class="a" style="left:52px;top:239px;width:1px;height:1px;background:#808080;"></div>
<div class="a" style="left:52px;top:241px;width:1px;height:1px;background:#808080;"></div>
<div class="a" style="left:54px;top:211px;width:1px;height:1px;background:#808080;"></div>
<div class="a" style="left:56px;top:211px;width:1px;height:1px;background:#808080;"></div>
<div class="a" style="left:58px;top:211px;width:1px;height:1px;background:#808080;"></div>
<div class="a" style="left:60px;top:211px;width:1px;height:1px;background:#808080;"></div>
<div class="a" style="left:62px;top:211px;width:1px;height:1px;background:#808080;"></div>
<svg class="a" style="left:63px;top:203px" width="16" height="16" viewBox="0 0 16 16"><rect x="5.5" y="3.5" width="10" height="10" rx="1.5" fill="#f0f0f0" stroke="#7a7a7a"/><rect x="0.5" y="2.5" width="5" height="12" rx="2" fill="#e6e6e6" stroke="#7a7a7a"/><path d="M2 4v9" stroke="#fff"/><rect x="7" y="5" width="7" height="2.3" fill="#0e4a48"/><rect x="7" y="7.3" width="7" height="5.2" fill="#8a8a8a"/><path d="M7.8 9h1.2M10 9h1.2M12.2 9h1.2M7.8 11h1.2M10 11h1.2M12.2 11h1.2" stroke="#fff" stroke-width="1.1"/></svg>
<div class="a t" style="left:84.50px;top:204px;color:#000;font-size:12px;transform:scaleX(0.9052);transform-origin:0 0;">ЗАО "ПЕРЕСВЕТ-ИНВЕСТ"</div>
<div class="a" style="left:54px;top:227px;width:1px;height:1px;background:#808080;"></div>
<div class="a" style="left:56px;top:227px;width:1px;height:1px;background:#808080;"></div>
<div class="a" style="left:58px;top:227px;width:1px;height:1px;background:#808080;"></div>
<div class="a" style="left:60px;top:227px;width:1px;height:1px;background:#808080;"></div>
<div class="a" style="left:62px;top:227px;width:1px;height:1px;background:#808080;"></div>
<svg class="a" style="left:63px;top:219px" width="16" height="16" viewBox="0 0 16 16"><rect x="5.5" y="3.5" width="10" height="10" rx="1.5" fill="#f0f0f0" stroke="#7a7a7a"/><rect x="0.5" y="2.5" width="5" height="12" rx="2" fill="#e6e6e6" stroke="#7a7a7a"/><path d="M2 4v9" stroke="#fff"/><rect x="7" y="5" width="7" height="2.3" fill="#0e4a48"/><rect x="7" y="7.3" width="7" height="5.2" fill="#8a8a8a"/><path d="M7.8 9h1.2M10 9h1.2M12.2 9h1.2M7.8 11h1.2M10 11h1.2M12.2 11h1.2" stroke="#fff" stroke-width="1.1"/></svg>
<div class="a t" style="left:84.50px;top:220px;color:#000;font-size:12px;transform:scaleX(0.9131);transform-origin:0 0;">ООО " Строй Престиж"</div>
<div class="a" style="left:54px;top:243px;width:1px;height:1px;background:#808080;"></div>
<div class="a" style="left:56px;top:243px;width:1px;height:1px;background:#808080;"></div>
<div class="a" style="left:58px;top:243px;width:1px;height:1px;background:#808080;"></div>
<div class="a" style="left:60px;top:243px;width:1px;height:1px;background:#808080;"></div>
<div class="a" style="left:62px;top:243px;width:1px;height:1px;background:#808080;"></div>
<svg class="a" style="left:63px;top:235px" width="16" height="16" viewBox="0 0 16 16"><rect x="5.5" y="3.5" width="10" height="10" rx="1.5" fill="#f0f0f0" stroke="#7a7a7a"/><rect x="0.5" y="2.5" width="5" height="12" rx="2" fill="#e6e6e6" stroke="#7a7a7a"/><path d="M2 4v9" stroke="#fff"/><rect x="7" y="5" width="7" height="2.3" fill="#0e4a48"/><rect x="7" y="7.3" width="7" height="5.2" fill="#8a8a8a"/><path d="M7.8 9h1.2M10 9h1.2M12.2 9h1.2M7.8 11h1.2M10 11h1.2M12.2 11h1.2" stroke="#fff" stroke-width="1.1"/></svg>
<div class="a t" style="left:84.50px;top:236px;color:#000;font-size:12px;transform:scaleX(0.9142);transform-origin:0 0;">ООО "Пересвет-Реал Эстейт"</div>
<svg class="a" style="left:44px;top:251px" width="16" height="16" viewBox="0 0 16 16"><defs><linearGradient id="fo" x1="0" y1="1" x2="1" y2="0"><stop offset="0.1" stop-color="#ffee00"/><stop offset="0.9" stop-color="#ff9000"/></linearGradient></defs><path d="M2.5 6V1.5h6l1 1.5h5.5v11.5" fill="#ffff60" stroke="#9c9cb0"/><path d="M0.5 5.5H12.5L14.5 14.5H2.5Z" fill="url(#fo)" stroke="#9c9cb0"/></svg>
<div class="a" style="left:63px;top:251px;width:84px;height:16px;background:#3399ff;border:1px solid #ff9020;outline:1px dotted #000;outline-offset:-1px"></div>
<div class="a t" style="left:65.80px;top:252px;color:#fff;font-size:12px;transform:scaleX(0.9625);transform-origin:0 0;">ПОДРЯДЧИКИ</div>
<svg class="a" style="left:15px;top:30px" width="16" height="16" viewBox="0 0 16 16"><rect x="0.5" y="1.5" width="15" height="13" fill="#fff" stroke="#808080"/><rect x="0" y="0" width="7" height="7" rx="1.2" fill="#7e7e7e"/><path d="M3.5 1L6 3.5L3.5 6L1 3.5Z" fill="#fff"/><circle cx="3.5" cy="3.5" r="0.8" fill="#7e7e7e"/><circle cx="1.3" cy="1.3" r="0.5" fill="#fff"/><circle cx="5.7" cy="1.3" r="0.5" fill="#fff"/><circle cx="1.3" cy="5.7" r="0.5" fill="#fff"/><circle cx="5.7" cy="5.7" r="0.5" fill="#fff"/><path d="M3 12.5Q4.5 12.5 4.5 10V7.5H7.5V12.5" stroke="#111" stroke-width="1.1" fill="none"/><path d="M13 8Q12.5 7.3 11.3 7.3Q9.3 7.3 9.3 10Q9.3 12.6 11.3 12.6Q12.5 12.6 13 11.8" stroke="#111" stroke-width="1.1" fill="none"/></svg>
<svg class="a" style="left:38px;top:30px" width="16" height="16" viewBox="0 0 16 16"><rect x="0.5" y="1.5" width="15" height="13" fill="#fff" stroke="#808080"/><rect x="0" y="0" width="7" height="7" rx="1.2" fill="#7e7e7e"/><path d="M3.5 1L6 3.5L3.5 6L1 3.5Z" fill="#fff"/><circle cx="3.5" cy="3.5" r="0.8" fill="#7e7e7e"/><circle cx="1.3" cy="1.3" r="0.5" fill="#fff"/><circle cx="5.7" cy="1.3" r="0.5" fill="#fff"/><circle cx="1.3" cy="5.7" r="0.5" fill="#fff"/><circle cx="5.7" cy="5.7" r="0.5" fill="#fff"/><path d="M6.5 13V7.5H9Q10.8 7.5 10.8 9.2Q10.8 10.8 9 10.8H6.5" stroke="#111" stroke-width="1.1" fill="none"/></svg>
<svg class="a" style="left:61px;top:30px" width="16" height="16" viewBox="0 0 16 16"><rect x="0.5" y="1.5" width="15" height="13" fill="#fff" stroke="#808080"/><rect x="0" y="0" width="7" height="7" rx="1.2" fill="#7e7e7e"/><path d="M3.5 1L6 3.5L3.5 6L1 3.5Z" fill="#fff"/><circle cx="3.5" cy="3.5" r="0.8" fill="#7e7e7e"/><circle cx="1.3" cy="1.3" r="0.5" fill="#fff"/><circle cx="5.7" cy="1.3" r="0.5" fill="#fff"/><circle cx="1.3" cy="5.7" r="0.5" fill="#fff"/><circle cx="5.7" cy="5.7" r="0.5" fill="#fff"/><path d="M3.5 13V7.5H7V13" stroke="#111" stroke-width="1.1" fill="none"/><path d="M9.3 13V7.5H11.6Q13.3 7.5 13.3 9.2Q13.3 10.8 11.6 10.8H9.3" stroke="#111" stroke-width="1.1" fill="none"/></svg>
<svg class="a" style="left:89px;top:30px" width="16" height="16" viewBox="0 0 16 16"><rect x="1.5" y="1.5" width="7" height="2" fill="#f4f4f4" stroke="#808080"/><path d="M5.5 4v11M5 6.5h2M5 10.5h2M5 14.5h2" stroke="#808080" fill="none"/><rect x="7.5" y="5.5" width="6" height="2" fill="#f4f4f4" stroke="#808080"/><rect x="7.5" y="9.5" width="6" height="2" fill="#f4f4f4" stroke="#808080"/><rect x="7.5" y="13.5" width="6" height="2" fill="#f4f4f4" stroke="#808080"/><path d="M9.5 7.5L15.5 1" stroke="#7a7a7a" stroke-width="2.2"/><path d="M10 7L15 1.6" stroke="#d8d8d8" stroke-width="0.8" stroke-dasharray="1 1"/></svg>
<svg class="a" style="left:112px;top:30px" width="16" height="16" viewBox="0 0 16 16"><rect x="1.5" y="1.5" width="7" height="2" fill="#f4f4f4" stroke="#808080"/><path d="M5.5 4v11M5 6.5h2M5 10.5h2M5 14.5h2" stroke="#808080" fill="none"/><rect x="7.5" y="5.5" width="6" height="2" fill="#f4f4f4" stroke="#808080"/><rect x="7.5" y="9.5" width="6" height="2" fill="#f4f4f4" stroke="#808080"/><rect x="7.5" y="13.5" width="6" height="2" fill="#f4f4f4" stroke="#808080"/><path d="M12 3L16 7.5M16 3L12 7.5" stroke="#808080" stroke-width="1"/><circle cx="12.3" cy="3.3" r="1" fill="#808080"/><circle cx="15.7" cy="3.3" r="1" fill="#808080"/></svg>
<svg class="a" style="left:149px;top:30px" width="16" height="16" viewBox="0 0 16 16"><rect x="1.5" y="1.5" width="7" height="2" fill="#f0f000" stroke="#a0a030"/><path d="M5.5 4v11M5 6.5h2M5 10.5h2M5 14.5h2" stroke="#203060" fill="none"/><rect x="7.5" y="5.5" width="6" height="2" fill="#a8c8f0" stroke="#5070a0"/><rect x="7.5" y="9.5" width="6" height="2" fill="#a8c8f0" stroke="#5070a0"/><rect x="7.5" y="13.5" width="6" height="2" fill="#a8c8f0" stroke="#5070a0"/></svg>
<svg class="a" style="left:171px;top:30px" width="17" height="16" viewBox="0 0 17 16"><rect x="4.5" y="1.5" width="7" height="2" fill="#f4f4f4" stroke="#808080"/><path d="M8.5 4v11M8 6.5h2M8 10.5h2M8 14.5h2" stroke="#808080" fill="none"/><rect x="10.5" y="5.5" width="6" height="2" fill="#f4f4f4" stroke="#808080"/><rect x="10.5" y="9.5" width="6" height="2" fill="#f4f4f4" stroke="#808080"/><rect x="10.5" y="13.5" width="6" height="2" fill="#f4f4f4" stroke="#808080"/><path d="M1 10h3.5" stroke="#808080" stroke-width="2"/><path d="M3.5 7L7 10L3.5 13z" fill="#808080"/></svg>
<svg class="a" style="left:201px;top:30px" width="16" height="16" viewBox="0 0 16 16"><rect x="1.5" y="1.5" width="13" height="13" fill="#fff" stroke="#808080"/><path d="M3.5 4.5H7L13 11.5H9.5Z" fill="#7a7a7a"/><path d="M10 4.5H12.8L6.8 11.5H3.8Z" fill="#8e8e8e"/><path d="M4 11.5h9" stroke="#b8b8b8" stroke-width="0.8"/></svg>
<svg class="a" style="left:230px;top:30px" width="16" height="16" viewBox="0 0 16 16"><path d="M2 14L6.5 9.5" stroke="#e06818" stroke-width="3" stroke-linecap="round"/><circle cx="10" cy="6" r="4.4" fill="#aec4ee" stroke="#f0a078" stroke-width="1.3"/><circle cx="9.5" cy="5.3" r="2" fill="#dde6fb"/></svg>
<svg class="a" style="left:266px;top:30px" width="16" height="16" viewBox="0 0 16 16"><path d="M1 1h12l2 2v12H1z" fill="#7a7a7a"/><rect x="4" y="1" width="7" height="5" fill="#e0e0e0"/><rect x="8" y="2" width="2" height="3" fill="#7a7a7a"/><rect x="3" y="9" width="10" height="6" fill="#e4e4e4"/></svg>
<svg class="a" style="left:289px;top:30px" width="16" height="16" viewBox="0 0 16 16"><path d="M4.8 3.6Q1.8 5.5 1.9 8.8Q2.6 13 7.6 13.3" stroke="#7a7a7a" stroke-width="2" fill="none"/><path d="M2 2H6.7L6 6.5z" fill="#7a7a7a"/><path d="M7.6 3.2Q12.5 3.1 13.9 7.5Q14 11 11.3 12.4" stroke="#7a7a7a" stroke-width="2" fill="none"/><path d="M9 9.8V14H13.4z" fill="#7a7a7a"/></svg>
<svg class="a" style="left:312px;top:30px" width="16" height="16" viewBox="0 0 16 16"><path d="M4 9Q8 3.5 13.5 10.5" stroke="#7a7a7a" stroke-width="1.8" fill="none"/><path d="M1.5 6v5.5h5.5z" fill="#7a7a7a"/></svg>
<svg class="a" style="left:341px;top:30px" width="16" height="16" viewBox="0 0 16 16"><path d="M5 4Q10 0 13.5 6V9" stroke="#2222e8" stroke-width="2" fill="none"/><path d="M0.5 5L6 1.5V8z" fill="#2222e8"/><rect x="4.5" y="8.5" width="10" height="7" fill="#fff" stroke="#5070b0"/><path d="M7 10.5L12 14M12 10.5L7 14M9.5 10v4.5M7 12.2h5" stroke="#111" stroke-width="1"/></svg>
<svg class="a" style="left:371px;top:30px" width="16" height="16" viewBox="0 0 16 16"><rect x="0.5" y="3.5" width="9" height="4" fill="#f4f4f4" stroke="#808080"/><path d="M2.5 5.5h2.5" stroke="#808080" stroke-width="1.2"/><rect x="2.5" y="7.5" width="9" height="8" fill="#a8a8a8" stroke="#808080"/><path d="M2.5 11.5h9" stroke="#808080"/><rect x="8" y="0" width="7" height="7" rx="1.2" fill="#7e7e7e"/><path d="M11.5 1L14 3.5L11.5 6L9 3.5Z" fill="#fff"/><circle cx="11.5" cy="3.5" r="0.8" fill="#7e7e7e"/><circle cx="9.3" cy="1.3" r="0.5" fill="#fff"/><circle cx="13.7" cy="1.3" r="0.5" fill="#fff"/><circle cx="9.3" cy="5.7" r="0.5" fill="#fff"/><circle cx="13.7" cy="5.7" r="0.5" fill="#fff"/></svg>
<svg class="a" style="left:394px;top:30px" width="16" height="16" viewBox="0 0 16 16"><rect x="0.5" y="3.5" width="9" height="4" fill="#a8a8a8" stroke="#808080"/><rect x="2.5" y="7.5" width="9" height="8" fill="#a8a8a8" stroke="#808080"/><rect x="3" y="11.5" width="8" height="3.5" fill="#f4f4f4"/><path d="M2.5 11.5h9M4 13.3h2.5" stroke="#808080"/><rect x="8" y="0" width="7" height="7" rx="1.2" fill="#7e7e7e"/><path d="M11.5 1L14 3.5L11.5 6L9 3.5Z" fill="#fff"/><circle cx="11.5" cy="3.5" r="0.8" fill="#7e7e7e"/><circle cx="9.3" cy="1.3" r="0.5" fill="#fff"/><circle cx="13.7" cy="1.3" r="0.5" fill="#fff"/><circle cx="9.3" cy="5.7" r="0.5" fill="#fff"/><circle cx="13.7" cy="5.7" r="0.5" fill="#fff"/></svg>
<svg class="a" style="left:416px;top:30px" width="16" height="16" viewBox="0 0 16 16"><path d="M1.5 2.5h9v8h-2.5l-2 3.5v-3.5h-4.5z" fill="#efefef" stroke="#808080" stroke-linejoin="round"/><rect x="9" y="0" width="7" height="7" rx="1.2" fill="#7e7e7e"/><path d="M12.5 1L15 3.5L12.5 6L10 3.5Z" fill="#fff"/><circle cx="12.5" cy="3.5" r="0.8" fill="#7e7e7e"/><circle cx="10.3" cy="1.3" r="0.5" fill="#fff"/><circle cx="14.7" cy="1.3" r="0.5" fill="#fff"/><circle cx="10.3" cy="5.7" r="0.5" fill="#fff"/><circle cx="14.7" cy="5.7" r="0.5" fill="#fff"/></svg>
<svg class="a" style="left:445px;top:30px" width="16" height="16" viewBox="0 0 16 16"><rect x="4" y="3.5" width="6" height="2.5" fill="#8a8a8a"/><rect x="2" y="5.5" width="10" height="2.5" fill="#8a8a8a"/><path d="M5 4.8h4M3 6.8h3M7 6.8h4" stroke="#c8c8c8" stroke-width="0.7"/><path d="M0.5 8.5H14Q13 13.8 7 13.8Q1.5 13.8 0.5 8.5z" fill="#9a9a9a"/><path d="M3 10.5Q7 12 11 10" stroke="#c8c8c8" stroke-width="1" fill="none"/><path d="M15.5 6v8" stroke="#333" stroke-width="1.3"/></svg>
<svg class="a" style="left:468px;top:30px" width="16" height="16" viewBox="0 0 16 16"><rect x="4.5" y="2.5" width="10" height="10" fill="#a8a8a8" stroke="#7a7a7a"/><path d="M7 4.5h1M10 5.5h2M11 6v3M10 9.5h2" stroke="#6a6a6a"/><rect x="0.5" y="7.5" width="7" height="7" fill="#9a9a9a" stroke="#707070"/><path d="M2.5 9v4.5M4.5 9v4.5" stroke="#c0c0c0"/><rect x="10.5" y="10.5" width="5" height="4.5" fill="#b8b8b8" stroke="#707070"/></svg>
<svg class="a" style="left:497px;top:30px" width="16" height="16" viewBox="0 0 16 16"><path d="M2.5 2.5L13 13M13 2.5L2.5 13" stroke="#a8a8a8" stroke-width="1.5"/></svg>
<svg class="a" style="left:526px;top:30px" width="16" height="16" viewBox="0 0 16 16"><rect x="3.5" y="0.5" width="10" height="14" rx="1" fill="#e6e6e6" stroke="#808080"/><rect x="4" y="2" width="9" height="2.5" fill="#7a7a7a"/><path d="M5 6.5h1M7.5 6.5h1M10 6.5h1M5 8.5h1M7.5 8.5h1M10 8.5h1M5 10.5h1M7.5 10.5h1M10 10.5h1" stroke="#fff"/><rect x="0.5" y="10.5" width="5" height="2" rx="1" fill="#eee" stroke="#707070"/><rect x="0.5" y="12.5" width="5" height="2" rx="1" fill="#eee" stroke="#707070"/><rect x="10.5" y="8.5" width="5" height="2" rx="1" fill="#eee" stroke="#707070"/><rect x="10.5" y="10.5" width="5" height="2" rx="1" fill="#eee" stroke="#707070"/><rect x="10.5" y="12.5" width="5" height="2" rx="1" fill="#eee" stroke="#707070"/></svg>
<svg class="a" style="left:549px;top:30px" width="16" height="16" viewBox="0 0 16 16"><path d="M4.5 2.5h9v13h-12v-9.5z" fill="#fafafa" stroke="#808080" stroke-linejoin="round"/><path d="M1.5 6h3V2.5" stroke="#808080" fill="none"/><rect x="8.5" y="0.5" width="7" height="7" rx="1" fill="#fafafa" stroke="#808080"/><path d="M10.5 2.5h2M10.5 4.5h2" stroke="#b0b0b0"/><path d="M1 10.5h5.5M3.8 7.5v6" stroke="#5a5a5a" stroke-width="2"/><rect x="6" y="12" width="6" height="1.8" fill="#808080"/></svg>
<svg class="a" style="left:572px;top:30px" width="16" height="16" viewBox="0 0 16 16"><path d="M8 2v5.5M5.2 4.8h5.6" stroke="#5e5e5e" stroke-width="2.6" stroke-linecap="round"/><rect x="5" y="12" width="6.5" height="2.2" rx="1.1" fill="#8e8e8e"/></svg>
<svg class="a" style="left:718px;top:30px" width="16" height="16" viewBox="0 0 16 16"><path d="M1.5 3.5l2-2h4.5v11.5h-6.5z" fill="#f4f4f4" stroke="#9a9a9a"/><path d="M6.5 6.5l2-2h5v11h-7z" fill="#ececec" stroke="#9a9a9a"/></svg>
<svg class="a" style="left:742px;top:30px" width="16" height="16" viewBox="0 0 16 16"><rect x="0.5" y="2.5" width="15" height="12" rx="1.5" fill="#f8b828" stroke="#d89018"/><rect x="5" y="1" width="6" height="2.5" rx="1" fill="#f8e080"/><path d="M4.5 6.5l2-2h5v11h-7z" fill="#c8e6ec" stroke="#6a9a9a"/></svg>
<svg class="a" style="left:830px;top:30px" width="16" height="16" viewBox="0 0 16 16"><path d="M4 5.5h12M4 8.5h12M4 11.5h12M4 14.5h12" stroke="#6a6a80"/><path d="M0 4h3.5" stroke="#0a30d8" stroke-width="2"/><path d="M2.5 1L6 4L2.5 7z" fill="#0a30d8"/></svg>
<svg class="a" style="left:853px;top:30px" width="16" height="16" viewBox="0 0 16 16"><path d="M4 5.5h12M4 8.5h12M4 11.5h12M4 14.5h12" stroke="#6a6a80"/><path d="M3 9V5" stroke="#0a30d8" stroke-width="2"/><path d="M0 5.5L3 2L6 5.5z" fill="#0a30d8"/></svg>
<svg class="a" style="left:876px;top:30px" width="16" height="16" viewBox="0 0 16 16"><path d="M4 5.5h12M4 8.5h12M4 11.5h12M4 14.5h12" stroke="#6a6a80"/><path d="M3 8v4" stroke="#0a30d8" stroke-width="2"/><path d="M0 11.5L3 15L6 11.5z" fill="#0a30d8"/></svg>
<svg class="a" style="left:899px;top:30px" width="16" height="16" viewBox="0 0 16 16"><path d="M4 5.5h12M4 8.5h12M4 11.5h12M4 14.5h12" stroke="#6a6a80"/><path d="M0 12h3.5" stroke="#0a30d8" stroke-width="2"/><path d="M2.5 9L6 12L2.5 15z" fill="#0a30d8"/></svg>
<svg class="a" style="left:935px;top:30px" width="16" height="16" viewBox="0 0 16 16"><path d="M9.5 1.5Q14.8 3.5 14.5 9Q13.8 14.5 8 14.5Q5.5 14.5 4 13.2" stroke="#90a8b0" stroke-width="1.4" fill="none"/><path d="M3.5 3.5L14 14" stroke="#e09040" stroke-width="1.7"/><path d="M13 13L14.5 14.5" stroke="#a05018" stroke-width="2"/><path d="M1.5 5.5L5.5 1.5" stroke="#4a5258" stroke-width="2.6"/><path d="M1.5 14.5L5 11" stroke="#d88a30" stroke-width="2.2"/></svg>
<svg class="a" style="left:958px;top:30px" width="16" height="16" viewBox="0 0 16 16"><path d="M0 7H9.5L10.8 5H11.5V12H0z" fill="#2e7ae6"/><path d="M0 7.2H9.5" stroke="#78b4ff" stroke-width="0.7"/><path d="M11 6.5H13.5L16 9V12.5H11z" fill="#f4a420"/><rect x="12.2" y="7.3" width="2" height="1.8" fill="#e8f4ff"/><rect x="0" y="11.5" width="16" height="1" fill="#202020"/><circle cx="3.5" cy="12.2" r="1.8" fill="#1a1a1a"/><circle cx="12.8" cy="12.2" r="1.8" fill="#1a1a1a"/><circle cx="3.5" cy="12.2" r="0.8" fill="#f0f080"/><circle cx="12.8" cy="12.2" r="0.8" fill="#f0f080"/><rect x="0" y="14.5" width="16" height="1" fill="#909090"/></svg>
<svg class="a" style="left:1010px;top:30px" width="16" height="16" viewBox="0 0 16 16"><path d="M0 7H9.5L10.8 5H11.5V12H0z" fill="#2e7ae6"/><path d="M0 7.2H9.5" stroke="#78b4ff" stroke-width="0.7"/><path d="M11 6.5H13.5L16 9V12.5H11z" fill="#f4a420"/><rect x="12.2" y="7.3" width="2" height="1.8" fill="#e8f4ff"/><rect x="0" y="11.5" width="16" height="1" fill="#202020"/><circle cx="3.5" cy="12.2" r="1.8" fill="#1a1a1a"/><circle cx="12.8" cy="12.2" r="1.8" fill="#1a1a1a"/><circle cx="3.5" cy="12.2" r="0.8" fill="#f0f080"/><circle cx="12.8" cy="12.2" r="0.8" fill="#f0f080"/><rect x="0" y="14.5" width="16" height="1" fill="#909090"/><path d="M2 7Q3.5 4 6 4.5Q8 3.5 10 6V7z" fill="#e86810"/><path d="M3.5 5.5h2M6.5 5h2" stroke="#ffb060" stroke-width="0.8"/></svg>
<svg class="a" style="left:981px;top:30px" width="16" height="16" viewBox="0 0 16 16"><rect x="5.2" y="5" width="5.5" height="2.6" rx="1.3" fill="#f06a08"/><path d="M6.7 6h2.5" stroke="#ffb070" stroke-width="0.7"/><rect x="2.5" y="7.5" width="5.5" height="2.6" rx="1.3" fill="#f06a08"/><path d="M4.0 8.5h2.5" stroke="#ffb070" stroke-width="0.7"/><rect x="8" y="7.5" width="5.5" height="2.6" rx="1.3" fill="#f06a08"/><path d="M9.5 8.5h2.5" stroke="#ffb070" stroke-width="0.7"/><rect x="0" y="10" width="5.5" height="2.6" rx="1.3" fill="#f06a08"/><path d="M1.5 11h2.5" stroke="#ffb070" stroke-width="0.7"/><rect x="5.3" y="10" width="5.5" height="2.6" rx="1.3" fill="#f06a08"/><path d="M6.8 11h2.5" stroke="#ffb070" stroke-width="0.7"/><rect x="10.5" y="10" width="5.5" height="2.6" rx="1.3" fill="#f06a08"/><path d="M12.0 11h2.5" stroke="#ffb070" stroke-width="0.7"/></svg>
<svg class="a" style="left:1046px;top:30px" width="16" height="16" viewBox="0 0 16 16"><path d="M0.8 10.2L6.5 8.5L15.2 10V11.8L7.2 14.6L0.8 12.6Z" fill="#fff" stroke="#e03030" stroke-width="1.1" stroke-linejoin="round"/><path d="M0.8 10.2L7.2 12.2L15.2 10" stroke="#e03030" stroke-width="1.1" fill="none"/><path d="M7.5 13.2L14.5 11" stroke="#d8d8e8" stroke-width="0.7"/><path d="M2.5 5.2L8.5 3.2L14.2 4.6V6.8L8.6 8.8L2.5 7Z" fill="#e860b0"/><path d="M3 7.4L8.6 9.2L14.2 7.2V8.8L8.6 10.6L3 8.8Z" fill="#fff" stroke="#c04080" stroke-width="0.6"/></svg>
<svg class="a" style="left:1069px;top:30px" width="16" height="16" viewBox="0 0 16 16"><path d="M0.8 10.2L6.5 8.5L15.2 10V11.8L7.2 14.6L0.8 12.6Z" fill="#fff" stroke="#30a0e0" stroke-width="1.1" stroke-linejoin="round"/><path d="M0.8 10.2L7.2 12.2L15.2 10" stroke="#30a0e0" stroke-width="1.1" fill="none"/><path d="M7.5 13.2L14.5 11" stroke="#d8d8e8" stroke-width="0.7"/><path d="M2.5 5.2L8.5 3.2L14.2 4.6V6.8L8.6 8.8L2.5 7Z" fill="#3050d0"/><path d="M3 7.4L8.6 9.2L14.2 7.2V8.8L8.6 10.6L3 8.8Z" fill="#fff" stroke="#2030a0" stroke-width="0.6"/></svg>
<svg class="a" style="left:115px;top:108px" width="16" height="16" viewBox="0 0 16 16"><path d="M0.5 1.5h6l1.5 1.5h7.5v12h-15z" fill="#f8c848" stroke="#707070"/><rect x="1" y="4" width="14" height="10.5" fill="#ffd860"/><path d="M6.5 12V7M4.5 8.5L6.5 6.5L8.5 8.5M6.5 12h4" stroke="#505060" stroke-width="1.2" fill="none"/></svg>
<svg class="a" style="left:138px;top:108px" width="16" height="16" viewBox="0 0 16 16"><path d="M0.5 1.5h6l1.5 1.5h7.5v12h-15z" fill="#90e070" stroke="#806060"/><rect x="1" y="4" width="14" height="10.5" fill="#90ee60"/><rect x="6" y="8" width="4" height="1.5" fill="#303030"/></svg>
<svg class="a" style="left:174px;top:108px" width="16" height="16" viewBox="0 0 16 16"><path d="M4.8 3.6Q1.8 5.5 1.9 8.8Q2.6 13 7.6 13.3" stroke="#20a020" stroke-width="2" fill="none"/><path d="M2 2H6.7L6 6.5z" fill="#20a020"/><path d="M7.6 3.2Q12.5 3.1 13.9 7.5Q14 11 11.3 12.4" stroke="#108010" stroke-width="2" fill="none"/><path d="M9 9.8V14H13.4z" fill="#108010"/></svg>
<svg class="a" style="left:205px;top:108px" width="16" height="16" viewBox="0 0 16 16"><path d="M0.5 2.5h6l1.5 1.5h7.5v11h-15z" fill="#f0e080" stroke="#706880"/><rect x="1" y="7" width="14" height="8" fill="#ffe030"/><rect x="9" y="0" width="7" height="7" rx="1.2" fill="#f07818"/><path d="M12.5 1L15 3.5L12.5 6L10 3.5Z" fill="#fff"/><circle cx="12.5" cy="3.5" r="0.8" fill="#f07818"/><circle cx="10.3" cy="1.3" r="0.5" fill="#fff"/><circle cx="14.7" cy="1.3" r="0.5" fill="#fff"/><circle cx="10.3" cy="5.7" r="0.5" fill="#fff"/><circle cx="14.7" cy="5.7" r="0.5" fill="#fff"/></svg>
<svg class="a" style="left:228px;top:108px" width="16" height="16" viewBox="0 0 16 16"><rect x="5.5" y="3.5" width="10" height="10" rx="1.5" fill="#f0f0f0" stroke="#7a7a7a"/><rect x="0.5" y="2.5" width="5" height="12" rx="2" fill="#e6e6e6" stroke="#7a7a7a"/><path d="M2 4v9" stroke="#fff"/><rect x="7" y="5" width="7" height="2.3" fill="#0e4a48"/><rect x="7" y="7.3" width="7" height="5.2" fill="#8a8a8a"/><path d="M7.8 9h1.2M10 9h1.2M12.2 9h1.2M7.8 11h1.2M10 11h1.2M12.2 11h1.2" stroke="#fff" stroke-width="1.1"/></svg>
<svg class="a" style="left:253px;top:108px" width="16" height="16" viewBox="0 0 16 16"><rect x="6" y="1" width="7" height="7" fill="#a0a0a0"/><rect x="3" y="5" width="5" height="6.5" fill="#a0a0a0"/><path d="M2 10.5H9L10 11.5V11H11V15L10 16H1L0 15V11H1z" fill="#a0a0a0"/><circle cx="9.5" cy="3" r="0.6" fill="#fff"/><circle cx="8" cy="4.5" r="0.6" fill="#fff"/><circle cx="11" cy="4.5" r="0.6" fill="#fff"/><circle cx="9.5" cy="6" r="0.6" fill="#fff"/><circle cx="4.5" cy="6.5" r="0.7" fill="#fff"/><circle cx="4.5" cy="10.5" r="0.7" fill="#fff"/><circle cx="6.5" cy="10.5" r="0.7" fill="#fff"/></svg>
<svg class="a" style="left:282px;top:108px" width="16" height="16" viewBox="0 0 16 16"><path d="M3 3L14 14M14 3L3 14" stroke="#f24a1e" stroke-width="1.6" stroke-linecap="round"/></svg></body></html>
